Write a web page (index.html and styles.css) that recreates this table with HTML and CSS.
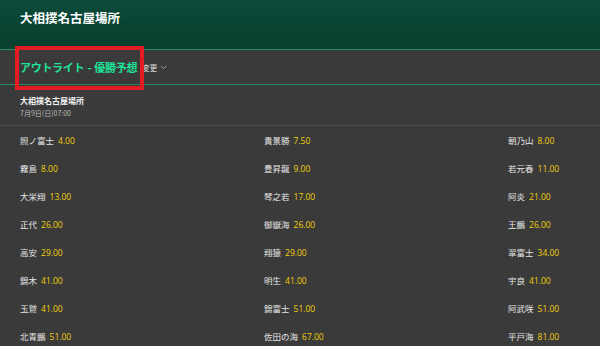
FILE: index.html
```html
<!DOCTYPE html>
<html lang="ja">
<head>
<meta charset="utf-8">
<link rel="stylesheet" href="styles.css">
</head>
<body>
<header class="top">
  <h1 class="top-title">大相撲名古屋場所</h1>
</header>
<section class="market">
  <h2 class="market-title">アウトライト - 優勝予想</h2>
  <span class="change">変更
    <svg class="chev" width="7" height="5" viewBox="0 0 7 5"><path d="M0.8 1 L3.5 3.7 L6.2 1" fill="none" stroke="#9a9a9a" stroke-width="1"/></svg>
  </span>
  <div class="highlight"></div>
</section>
<section class="event">
  <div class="event-name">大相撲名古屋場所</div>
  <div class="event-date">7月9日(日)07:00</div>
</section>
<div class="grid">
  <div class="cell"><span class="name">照ノ富士</span><span class="odds">4.00</span></div>
  <div class="cell"><span class="name">貴景勝</span><span class="odds">7.50</span></div>
  <div class="cell"><span class="name">朝乃山</span><span class="odds">8.00</span></div>
  <div class="cell"><span class="name">霧島</span><span class="odds">8.00</span></div>
  <div class="cell"><span class="name">豊昇龍</span><span class="odds">9.00</span></div>
  <div class="cell"><span class="name">若元春</span><span class="odds">11.00</span></div>
  <div class="cell"><span class="name">大栄翔</span><span class="odds">13.00</span></div>
  <div class="cell"><span class="name">琴之若</span><span class="odds">17.00</span></div>
  <div class="cell"><span class="name">阿炎</span><span class="odds">21.00</span></div>
  <div class="cell"><span class="name">正代</span><span class="odds">26.00</span></div>
  <div class="cell"><span class="name">御嶽海</span><span class="odds">26.00</span></div>
  <div class="cell"><span class="name">王鵬</span><span class="odds">26.00</span></div>
  <div class="cell"><span class="name">高安</span><span class="odds">29.00</span></div>
  <div class="cell"><span class="name">翔猿</span><span class="odds">29.00</span></div>
  <div class="cell"><span class="name">翠富士</span><span class="odds">34.00</span></div>
  <div class="cell"><span class="name">錦木</span><span class="odds">41.00</span></div>
  <div class="cell"><span class="name">明生</span><span class="odds">41.00</span></div>
  <div class="cell"><span class="name">宇良</span><span class="odds">41.00</span></div>
  <div class="cell"><span class="name">玉鷲</span><span class="odds">41.00</span></div>
  <div class="cell"><span class="name">錦富士</span><span class="odds">51.00</span></div>
  <div class="cell"><span class="name">阿武咲</span><span class="odds">51.00</span></div>
  <div class="cell"><span class="name">北青鵬</span><span class="odds">51.00</span></div>
  <div class="cell"><span class="name">佐田の海</span><span class="odds">67.00</span></div>
  <div class="cell"><span class="name">平戸海</span><span class="odds">81.00</span></div>
</div>
</body>
</html>
```
FILE: styles.css
```css
* { box-sizing: border-box; }
html, body {
  margin: 0;
  padding: 0;
  background: #3a3a3a;
  overflow: hidden;
  width: 600px;
  height: 346px;
  font-family: "Noto Sans CJK JP", "Noto Sans", sans-serif;
  color: #e8e8e8;
}
.top {
  height: 50px;
  background: linear-gradient(180deg, #0b4a39 0%, #09402f 100%);
  border-bottom: 1px solid #2a8a64;
  padding: 8px 0 0 20px;
}
.top-title {
  margin: 0;
  font-size: 12.5px;
  font-weight: 700;
  color: #ffffff;
  line-height: 20px;
}
.market {
  position: relative;
  height: 35px;
  border-bottom: 1px solid #2a8a64;
  display: flex;
  align-items: center;
  padding-left: 20px;
}
.market-title {
  margin: 0;
  font-size: 11px;
  font-weight: 700;
  color: #1ee398;
  line-height: 18px;
  letter-spacing: -0.3px;
  word-spacing: 1px;
}
.change {
  margin-left: 5px;
  font-size: 7.5px;
  color: #e0e0e0;
  display: flex;
  align-items: center;
  gap: 3px;
}
.chev { display: block; }
.highlight {
  position: absolute;
  left: 15px;
  top: -4px;
  width: 129px;
  height: 44px;
  border: 4px solid #e31b23;
  z-index: 2;
}
.event {
  height: 41px;
  border-bottom: 1px solid #4d4d4d;
  padding: 9px 0 0 20px;
}
.event-name {
  font-size: 8px;
  font-weight: 700;
  color: #f2f2f2;
  line-height: 13px;
}
.event-date {
  font-size: 7px;
  color: #bdbdbd;
  line-height: 12px;
}
.grid {
  display: grid;
  grid-template-columns: 244px 244px 1fr;
  padding-left: 20px;
}
.cell {
  height: 28px;
  display: flex;
  align-items: center;
  gap: 4px;
  font-size: 8.5px;
  white-space: nowrap;
}
.name { color: #e6e6e6; }
.odds { color: #f2cf0a; font-family: "Open Sans", "Noto Sans", sans-serif; }
```
